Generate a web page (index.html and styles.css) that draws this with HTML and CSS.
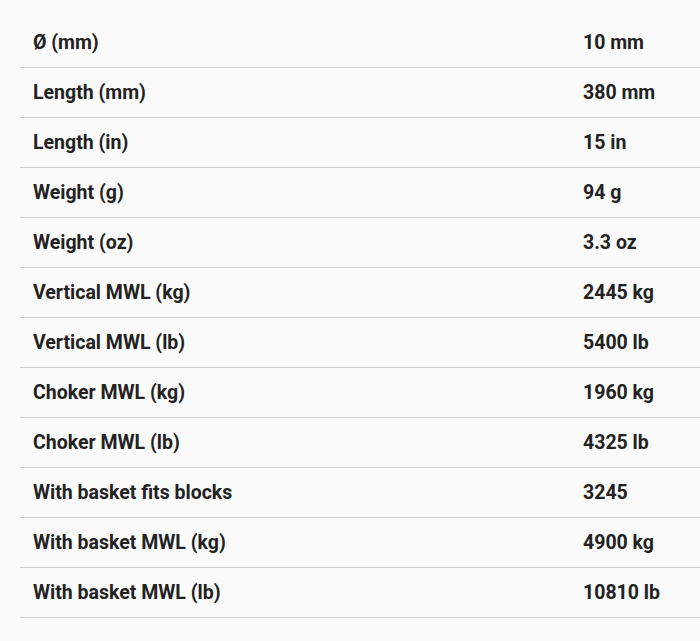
FILE: index.html
```html
<!DOCTYPE html>
<html>
<head>
<meta charset="utf-8">
<link rel="stylesheet" href="styles.css">
</head>
<body>
<div class="page">
  <div class="specs">
    <div class="row"><div class="cell">Ø (mm)</div><div class="cell">10 mm</div></div>
    <div class="row"><div class="cell">Length (mm)</div><div class="cell">380 mm</div></div>
    <div class="row"><div class="cell">Length (in)</div><div class="cell">15 in</div></div>
    <div class="row"><div class="cell">Weight (g)</div><div class="cell">94 g</div></div>
    <div class="row"><div class="cell">Weight (oz)</div><div class="cell">3.3 oz</div></div>
    <div class="row"><div class="cell">Vertical MWL (kg)</div><div class="cell">2445 kg</div></div>
    <div class="row"><div class="cell">Vertical MWL (lb)</div><div class="cell">5400 lb</div></div>
    <div class="row"><div class="cell">Choker MWL (kg)</div><div class="cell">1960 kg</div></div>
    <div class="row"><div class="cell">Choker MWL (lb)</div><div class="cell">4325 lb</div></div>
    <div class="row"><div class="cell">With basket fits blocks</div><div class="cell">3245</div></div>
    <div class="row"><div class="cell">With basket MWL (kg)</div><div class="cell">4900 kg</div></div>
    <div class="row"><div class="cell">With basket MWL (lb)</div><div class="cell">10810 lb</div></div>
  </div>
</div>
</body>
</html>
```
FILE: styles.css
```css
html, body {
  margin: 0;
  padding: 0;
  background: #fafafa;
}
.page {
  padding: 18px 0 0 20px;
  font-family: Roboto, "Liberation Sans", sans-serif;
}
.specs {
  display: flex;
  flex-direction: column;
}
.row {
  display: grid;
  grid-template-columns: 550px 1fr;
  height: 50px;
  box-sizing: border-box;
  border-bottom: 1px solid #d0d0d0;
  align-items: center;
}
.cell {
  padding: 0 13px;
  font-size: 19.5px;
  font-weight: 700;
  color: #222;
}
```
